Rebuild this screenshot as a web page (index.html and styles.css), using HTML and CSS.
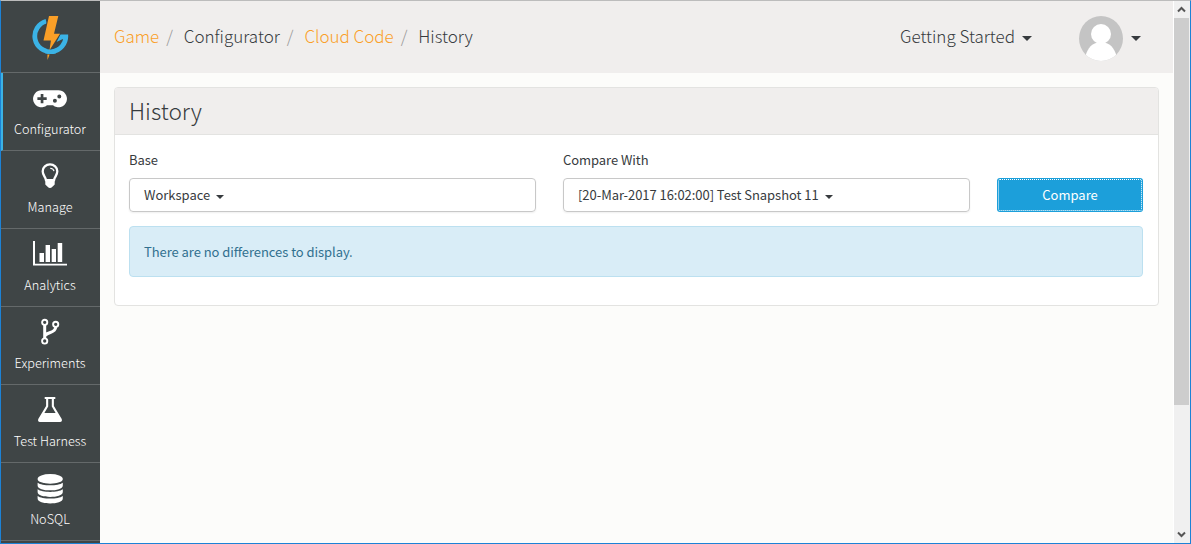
FILE: index.html
```
<!DOCTYPE html>
<html lang="en">
<head>
<meta charset="utf-8">
<title>History</title>
<link rel="stylesheet" href="styles.css">
</head>
<body>
<div class="window">
  <nav class="sidebar">
    <a class="logo">
      <svg width="38" height="46" viewBox="0 0 38 46"><path d="M14.2 6.2A15.5 15.5 0 1 0 33.8 20.5" fill="none" stroke="#3bb3e6" stroke-width="4.8"/><path d="M28 19.5H36.2L35.6 24H30.8L24.5 27Z" fill="#3bb3e6"/><path d="M17 1H26.3L22 18.2H28L19.3 34.3H16.2L18.3 26H11.5Z" fill="#3f4546" stroke="#3f4546" stroke-width="2"/><path d="M13 33.6Q18.5 35.4 24 33.4V38.2Q18.5 39.9 13 38.3Z" fill="#3bb3e6"/><path d="M17 1H26.3L22 18.7H28L17.5 35.2L18.9 25.5H11.5Z" fill="#fa9f27"/><path d="M15.4 39.5H17.6L15.5 45Z" fill="#fa9f27"/></svg>
    </a>
    <a class="item active">
      <svg class="icon" width="34" height="30" viewBox="0 0 34 30"><path fill="#fff" fill-rule="evenodd" d="M9 6.3H25A8.5 8.5 0 1 1 20 21.3H14A8.5 8.5 0 1 1 9 6.3ZM7.7 9.9V13.2H4.4V15.9H7.7V19.2H10.4V15.9H13.7V13.2H10.4V9.9ZM26.3 10.5A2 2 0 1 0 26.3 14.5A2 2 0 1 0 26.3 10.5ZM21.9 14.8A2 2 0 1 0 21.9 18.8A2 2 0 1 0 21.9 14.8Z"/></svg>
      <span>Configurator</span>
    </a>
    <a class="item">
      <svg class="icon" width="34" height="30" viewBox="0 0 34 30"><path d="M13 18.2C12.4 14.7 9.7 13.4 9.7 9.3C9.7 5.2 13 2.4 17 2.4S24.3 5.2 24.3 9.3C24.3 13.4 21.6 14.7 21 18.2Z" fill="none" stroke="#fff" stroke-width="2.3"/><path d="M17.2 6.2Q20.5 6.5 21 9.2" fill="none" stroke="#fff" stroke-width="1.1"/><path d="M12.3 17.8H21.7V22.5L19.4 24.7Q17 27.2 14.6 24.7L12.3 22.5Z" fill="#fff"/></svg>
      <span>Manage</span>
    </a>
    <a class="item">
      <svg class="icon" width="34" height="30" viewBox="0 0 34 30"><path d="M0 1H2V23.8H34V25.6H0ZM6.5 13H11V22H6.5ZM12.6 5H17V22H12.6ZM18.7 9H23V22H18.7ZM24.7 3H29.2V22H24.7Z" fill="#fff"/></svg>
      <span>Analytics</span>
    </a>
    <a class="item">
      <svg class="icon" width="34" height="30" viewBox="0 0 34 30"><g fill="none" stroke="#fff"><path d="M11.7 7V20M22.7 9C22.7 16 11.7 13.5 11.7 19" stroke-width="3"/><g fill="#3f4546" stroke-width="1.9"><circle cx="11.7" cy="4.3" r="2.6"/><circle cx="22.7" cy="6.3" r="2.6"/><circle cx="11.7" cy="23" r="2.6"/></g></g></svg>
      <span>Experiments</span>
    </a>
    <a class="item">
      <svg class="icon" width="34" height="30" viewBox="0 0 34 30"><path fill="#fff" fill-rule="evenodd" d="M11.7 1H22.3V3H20.9V10L28.6 22.8Q29.8 25.7 27 26H7Q4.2 25.7 5.4 22.8L13.1 10V3H11.7ZM15.2 3V10.5L11.4 17H22.6L18.8 10.5V3Z"/></svg>
      <span>Test Harness</span>
    </a>
    <a class="item">
      <svg class="icon" width="34" height="30" viewBox="0 0 34 30"><g fill="#fff"><ellipse cx="17.2" cy="4.9" rx="12.6" ry="4.9"/><path id="disk" d="M4.6 8.7C9 12.2 25.4 12.2 29.8 8.7V11.4C29.8 18 4.6 18 4.6 11.4Z"/><use href="#disk" y="6.6"/><use href="#disk" y="13.2"/></g></svg>
      <span>NoSQL</span>
    </a>
  </nav>
  <div class="page">
    <header class="topbar">
      <div class="crumbs"><a>Game</a><i>/</i><span>Configurator</span><i>/</i><a>Cloud Code</a><i>/</i><span>History</span></div>
      <div class="user">
        <span class="started">Getting Started</span><b class="caret big"></b>
        <svg class="avatar" width="44" height="45" viewBox="0 0 44 45"><defs><clipPath id="round"><ellipse cx="22" cy="22.5" rx="22" ry="22.5"/></clipPath></defs><g clip-path="url(#round)"><path fill="#c4c4c4" d="M0 0H44V45H0Z"/><circle cx="22" cy="18" r="10" fill="#fff"/><path fill="#fff" d="M6 43C7 34 12 28.5 17 27H27C32 28.5 37 34 38 43V46H6Z"/></g></svg>
        <b class="caret big"></b>
      </div>
    </header>
    <main class="panel">
      <h1>History</h1>
      <div class="body">
        <div class="form">
          <div class="field"><label>Base</label><div class="select"><span>Workspace</span><b class="caret"></b></div></div>
          <div class="field"><label>Compare With</label><div class="select"><span class="snapshot">[20-Mar-2017 16:02:00] Test Snapshot 11</span><b class="caret"></b></div></div>
          <button class="compare">Compare</button>
        </div>
        <div class="alert"><span>There are no differences to display.</span></div>
      </div>
    </main>
  </div>
  <div class="scrollbar">
    <svg width="15" height="17" viewBox="0 0 15 17"><path d="M4 10.5L7.5 7L11 10.5" fill="none" stroke="#555" stroke-width="2"/></svg>
    <div class="thumb"></div>
    <svg class="down" width="15" height="17" viewBox="0 0 15 17"><path d="M4 6.5L7.5 10L11 6.5" fill="none" stroke="#555" stroke-width="2"/></svg>
  </div>
</div>
</body>
</html>
```
FILE: styles.css
```
* { box-sizing: border-box; }
body { margin: 0; font-family: "Noto Sans CJK SC", "Open Sans", sans-serif; font-size: 13px; color: #373b3e; }
.window { width: 1191px; height: 544px; display: flex; overflow: hidden; border: 1px solid #1c82d6; border-top-color: #bcbcbc; background: #fcfcfa; }
.sidebar { width: 99px; flex: none; background: #3f4546; color: #fff; overflow: hidden; }
.logo { display: block; height: 72px; padding: 14px 0 0 31px; border-bottom: 1px solid #64696a; }
.logo svg { display: block; }
.item { display: flex; flex-direction: column; align-items: center; height: 78px; padding: 11px 1px 0 0; border-bottom: 1px solid #64696a; font-size: 12.7px; font-weight: 300; line-height: 18px; white-space: nowrap; }
.item.active { border-left: 2px solid #3bb3e6; padding-right: 3px; }
.icon { display: block; flex: none; margin-bottom: 6px; }
.page { width: 1073px; flex: none; }
.topbar { height: 72px; display: flex; justify-content: space-between; background: #f0eeed; font-size: 17px; font-weight: 300; line-height: 24px; white-space: nowrap; }
.crumbs { padding: 23px 0 0 14px; display: flex; letter-spacing: -0.02px; }
.crumbs a { color: #fa9f27; }
.crumbs i { font-style: normal; color: #999; width: 24.6px; padding-left: 7px; }
.user { width: 273px; display: flex; align-items: center; padding-bottom: 2px; }
.caret { display: block; border: 4px solid transparent; border-top-color: #373b3e; border-bottom: 0; margin: 3px 0 0 6px; }
.caret.big { border-width: 5px 5px 0; margin: 5px 0 0 8px; }
.started { width: 114px; }
.avatar { margin: 4px 0 0 47px; }
.panel { margin: 14px 14px 0; height: 219px; border: 1px solid #e3e3e1; border-radius: 4px; background: #fff; overflow: hidden; }
h1 { margin: 0; height: 47px; padding-left: 14px; border-bottom: 1px solid #e3e3e1; background: #f0eeed; font-size: 22.7px; font-weight: 300; line-height: 46px; }
.body { padding: 16px 15px 0 14px; }
.form { display: grid; grid-template-columns: 407px 407px 146px; gap: 27px; align-items: end; }
label { display: block; height: 27px; line-height: 18px; letter-spacing: -0.06px; }
.select { height: 34px; display: flex; align-items: center; padding-left: 14px; border: 1px solid #c8c8c8; border-radius: 4px; box-shadow: 0 1px 2px #0001; white-space: nowrap; }
.select span { margin-top: -2px; }
.snapshot { letter-spacing: -0.05px; }
.compare { height: 34px; padding: 0 0 2px; border: 0; border-radius: 3px; background: #1c9fda; color: #fff; font: inherit; outline: 1px dotted #fff; outline-offset: -2px; }
.alert { height: 51px; margin-top: 14px; padding-left: 14px; border: 1px solid #bce0f0; border-radius: 4px; background: #d9edf7; color: #31708f; line-height: 49px; letter-spacing: -0.06px; }
.scrollbar { width: 17px; flex: none; display: flex; flex-direction: column; background: #f0f0f0; border-left: 1px solid #fff; }
.scrollbar svg { display: block; flex: none; }
.thumb { height: 387px; background: #cdcdcd; margin-right: 1px; }
.down { margin-top: auto; }
```
